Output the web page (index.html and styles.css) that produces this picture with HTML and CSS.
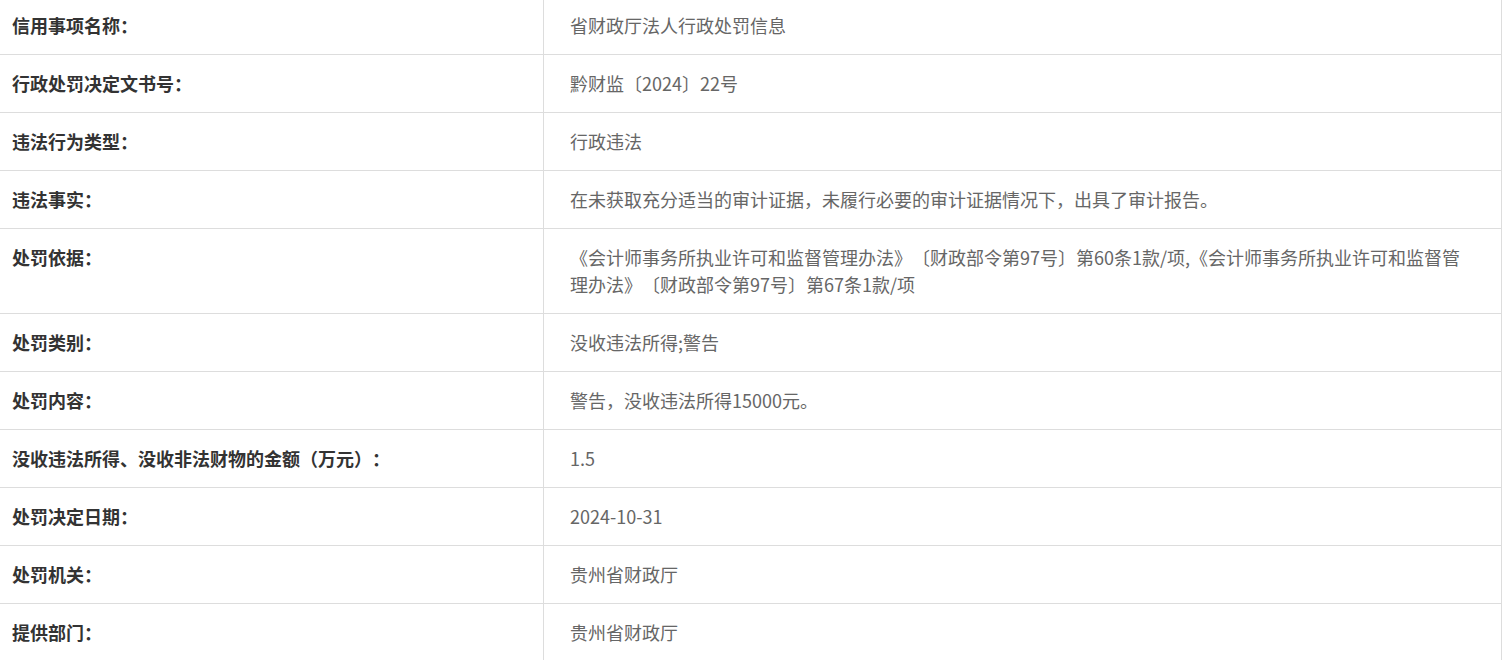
FILE: index.html
```html
<!DOCTYPE html>
<html lang="zh-CN">
<head>
<meta charset="utf-8">
<title>行政处罚信息</title>
<link rel="stylesheet" href="styles.css">
</head>
<body>
<div class="info-table">
  <div class="row"><div class="label">信用事项名称：</div><div class="value">省财政厅法人行政处罚信息</div></div>
  <div class="row"><div class="label">行政处罚决定文书号：</div><div class="value">黔财监〔2024〕22号</div></div>
  <div class="row"><div class="label">违法行为类型：</div><div class="value">行政违法</div></div>
  <div class="row"><div class="label">违法事实：</div><div class="value">在未获取充分适当的审计证据，未履行必要的审计证据情况下，出具了审计报告。</div></div>
  <div class="row"><div class="label">处罚依据：</div><div class="value">《会计师事务所执业许可和监督管理办法》〔财政部令第97号〕第60条1款/项,《会计师事务所执业许可和监督管理办法》〔财政部令第97号〕第67条1款/项</div></div>
  <div class="row"><div class="label">处罚类别：</div><div class="value">没收违法所得;警告</div></div>
  <div class="row"><div class="label">处罚内容：</div><div class="value">警告，没收违法所得15000元。</div></div>
  <div class="row"><div class="label">没收违法所得、没收非法财物的金额（万元）：</div><div class="value">1.5</div></div>
  <div class="row"><div class="label">处罚决定日期：</div><div class="value">2024-10-31</div></div>
  <div class="row"><div class="label">处罚机关：</div><div class="value">贵州省财政厅</div></div>
  <div class="row"><div class="label">提供部门：</div><div class="value">贵州省财政厅</div></div>
</div>
</body>
</html>
```

FILE: styles.css
```css
html, body {
  margin: 0;
  padding: 0;
  background: #ffffff;
}
body {
  font-family: "Noto Sans CJK SC", "Noto Sans", sans-serif;
  font-size: 18px;
  line-height: 27px;
  overflow: hidden;
  text-spacing-trim: space-all;
}
.info-table {
  width: 1501px;
  margin-top: -3px;
  border-right: 1px solid #dddddd;
}
.row {
  display: flex;
  border-bottom: 1px solid #dddddd;
}
.label {
  width: 531px;
  flex: none;
  padding: 15px 0 15px 12px;
  border-right: 1px solid #dddddd;
  font-weight: bold;
  color: #333333;
}
.value {
  flex: 1;
  min-width: 0;
  padding: 15px 26px;
  color: #666666;
}
```
